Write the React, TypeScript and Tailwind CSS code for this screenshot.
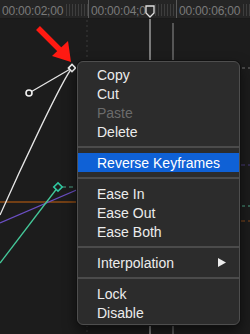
import { Fragment } from "react";

type Row = { label?: string; sep?: boolean; disabled?: boolean; active?: boolean; sub?: boolean };

const rows: Row[] = [
  { label: "Copy" },
  { label: "Cut" },
  { label: "Paste", disabled: true },
  { label: "Delete" },
  { sep: true },
  { label: "Reverse Keyframes", active: true },
  { sep: true },
  { label: "Ease In" },
  { label: "Ease Out" },
  { label: "Ease Both" },
  { sep: true },
  { label: "Interpolation", sub: true },
  { sep: true },
  { label: "Lock" },
  { label: "Disable" },
];

const labels = ["00:00:02;00", "00:00:04;00", "00:00:06;00"];

const Ruler = () => {
  return (
    <div className="flex h-[19px] bg-[#252525] border-b border-[#1a1a1a]">
      {labels.map((l, i) => (
        <div
          key={l}
          className={`flex items-center w-[88px] shrink-0 ${i > 0 ? "border-l border-[#5a5a5a]" : ""}`}
        >
          <span className="pl-[2px] pr-[3px] pt-[3px] text-[12px] leading-none text-[#7a7a7a] tracking-[-0.2px]">
            {l}
          </span>
          <div className="flex-1 self-stretch mt-[4px] mb-[2px] bg-[repeating-linear-gradient(90deg,#3e3e3e_0_1px,transparent_1px_3px)]" />
        </div>
      ))}
    </div>
  );
};

const Graph = () => {
  return (
    <svg width="250" height="315" viewBox="0 19 250 315" className="block">
      {/* guide lines */}
      <line x1="87" y1="20" x2="87" y2="334" stroke="#3a3a3a" strokeDasharray="2 3" />
      <line x1="173" y1="23" x2="173" y2="334" stroke="#6a6a6a" strokeWidth="1.5" />
      <line x1="150" y1="17" x2="150" y2="334" stroke="#d8d8d8" strokeWidth="1" />
      {/* curves */}
      <line x1="0" y1="202" x2="160" y2="202" stroke="#c8620f" strokeWidth="1.2" />
      <line x1="241" y1="221" x2="250" y2="221" stroke="#8a4a1a" strokeWidth="1.2" strokeDasharray="4 3" />
      <line x1="0" y1="223" x2="130" y2="167" stroke="#6b4fc4" strokeWidth="1.3" />
      <line x1="241" y1="165" x2="250" y2="165" stroke="#4a3d80" strokeWidth="1.2" strokeDasharray="4 3" />
      <line x1="58" y1="187" x2="0" y2="263" stroke="#45c99a" strokeWidth="1.3" />
      <line x1="62" y1="187" x2="120" y2="187" stroke="#3e7a66" strokeWidth="1.3" strokeDasharray="4 3" />
      <line x1="242" y1="206" x2="250" y2="206" stroke="#3e7a66" strokeWidth="1.3" strokeDasharray="3 3" />
      <line x1="242" y1="68" x2="250" y2="68" stroke="#777" strokeDasharray="3 3" />
      <rect x="55" y="184" width="6" height="6" transform="rotate(45 58 187)" fill="#1c1c1c" stroke="#2fc7a0" strokeWidth="1.6" />
      <path d="M72 68 C62 80 20 170 0 215" stroke="#e6e6e6" strokeWidth="1.3" fill="none" />
      <line x1="72" y1="68" x2="29" y2="93" stroke="#e6e6e6" strokeWidth="1.3" />
      <circle cx="29" cy="93" r="3" fill="#1c1c1c" stroke="#f0f0f0" strokeWidth="1.6" />
      <rect x="69.5" y="65.5" width="5" height="5" transform="rotate(45 72 68)" fill="#1c1c1c" stroke="#f4f4f4" strokeWidth="1.6" />
      {/* arrow */}
      <line x1="38" y1="28" x2="60" y2="50" stroke="#ff1a12" strokeWidth="5.5" />
      <polygon points="52,56 68,41 71,62" fill="#ff1a12" />
    </svg>
  );
};

const Menu = () => {
  return (
    <div className="absolute left-[77px] top-[61px] w-[163px] h-[264px] rounded-[6px] bg-[#2c2c2c] border border-[#4e4e4e] shadow-[0_0_0_1px_#111,0_6px_14px_rgba(0,0,0,0.6)] pt-[3px] font-['Liberation_Sans',Arial,sans-serif] text-[14px]">
      {rows.map((r, i) => (
        <Fragment key={i}>
          {r.sep ? (
            <div className="h-[12px] flex items-center">
              <div className="h-[2px] w-full bg-[#4b4b4b]" />
            </div>
          ) : (
            <div
              className={`h-[19px] flex items-center justify-between pl-[19px] pr-[13px] leading-none ${
                r.active ? "bg-[#0f61d6] text-white" : r.disabled ? "text-[#6b6b6b]" : "text-[#ececec]"
              }`}
            >
              <span>{r.label}</span>
              {r.sub && (
                <svg width="8" height="9" viewBox="0 0 8 9">
                  <polygon points="0,0 8,4.5 0,9" fill="#ececec" />
                </svg>
              )}
            </div>
          )}
        </Fragment>
      ))}
    </div>
  );
};

const App = () => {
  return (
    <div className="relative w-[250px] h-[334px] overflow-hidden bg-[#1c1c1c] font-['Liberation_Sans',Arial,sans-serif]">
      <Ruler />
      <Graph />
      {/* playhead marker */}
      <svg width="10" height="13" viewBox="0 0 10 13" className="absolute left-[145px] top-[5px]">
        <path d="M1 1 H9 V8 L5 12 L1 8 Z" fill="#2a2a2a" stroke="#e0e0e0" strokeWidth="1.3" />
      </svg>
      <Menu />
    </div>
  );
};

export default App;
